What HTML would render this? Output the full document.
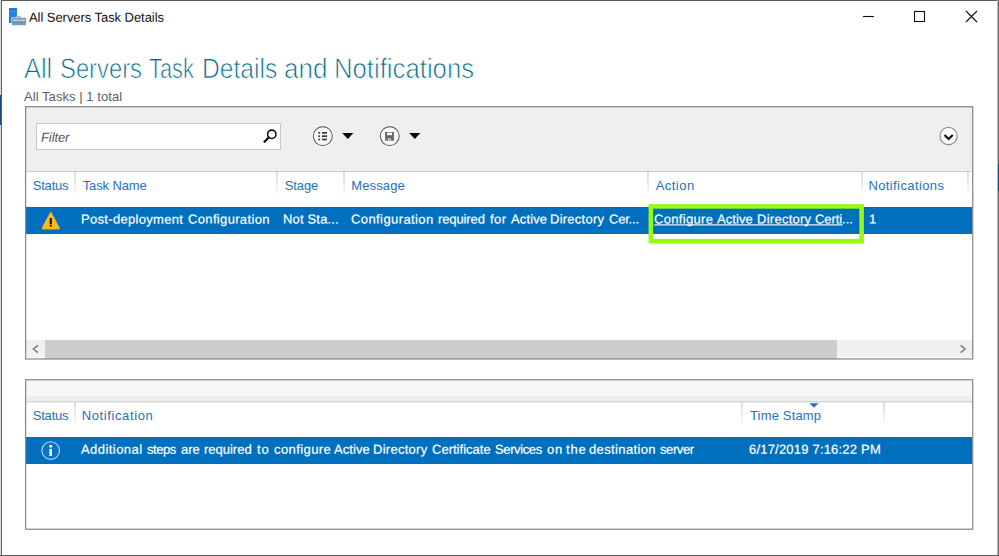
<!DOCTYPE html>
<html>
<head>
<meta charset="utf-8">
<title>All Servers Task Details</title>
<style>
html,body{margin:0;padding:0;}
body{width:999px;height:556px;position:relative;overflow:hidden;background:#fff;font-family:"Liberation Sans",sans-serif;font-size:13px;color:#222;}
.abs{position:absolute;}
.ln{position:absolute;left:0;width:999px;white-space:nowrap;}
.ln span{position:absolute;top:0;transform-origin:0 100%;}
.hd{color:#2b73b9;}
.rw{color:#fff;}
.div{position:absolute;width:2px;margin-left:-1px;background:linear-gradient(#dcdcdc,#ebebeb 50%,rgba(255,255,255,0));}
</style>
</head>
<body>
<!-- window frame -->
<div class="abs" style="left:0;top:0;width:999px;height:1px;background:#5a5a5a;"></div>
<div class="abs" style="left:0;top:0;width:1px;height:556px;background:#d8d8d8;"></div>
<div class="abs" style="left:0;top:95px;width:1px;height:30px;background:#1d4a75;"></div>
<div class="abs" style="left:1px;top:0;width:1px;height:556px;background:#5f5f5f;"></div>
<div class="abs" style="left:997px;top:0;width:1px;height:556px;background:#b8b8b8;"></div>
<div class="abs" style="left:998px;top:0;width:1px;height:556px;background:#6a6a6a;"></div>
<div class="abs" style="left:998px;top:164px;width:1px;height:27px;background:#1d4a75;"></div>
<div class="abs" style="left:0;top:555px;width:999px;height:1px;background:#5a5a5a;"></div>

<!-- title bar -->
<svg class="abs" style="left:8px;top:7px;" width="20" height="20" viewBox="0 0 20 20">
  <rect x="1" y="1" width="8" height="15" fill="#1583dd"/>
  <rect x="1" y="4.3" width="8" height="1" fill="#4aa0e8"/>
  <rect x="1" y="7.4" width="8" height="0.7" fill="#3392e3"/>
  <path d="M3.4 10.3H8.6V8.4H13.4V10.3H18.6V18.6H3.4Z" fill="#fff" opacity=".85"/>
  <rect x="4" y="10.8" width="14.1" height="7.4" rx="0.8" fill="#7f9ab0"/>
  <path d="M9.2 10.8V9.2H12.8V10.8Z" fill="#8fa6b9"/>
  <path d="M5 13.2L6.6 12.2V12.8H15.5V12.2L17.1 13.2L15.5 14.2V13.6H6.6V14.2Z" fill="#f1f5f8"/>
  <rect x="4" y="15.2" width="14.1" height="0.6" fill="#728da4"/>
</svg>
<svg class="abs" style="left:855px;top:4px;" width="130" height="24" viewBox="0 0 130 24">
  <path d="M8 12.5H19" stroke="#111" stroke-width="1.1" fill="none"/>
  <rect x="59.5" y="7.5" width="10" height="10" stroke="#111" stroke-width="1.1" fill="none"/>
  <path d="M111 7L122 18M122 7L111 18" stroke="#111" stroke-width="1.1" fill="none"/>
</svg>

<!-- heading -->

<!-- panel 1 -->
<div class="abs" style="left:26px;top:107px;width:946px;height:64px;background:#efefef;"></div>
<div class="abs" style="left:26px;top:171px;width:946px;height:1px;background:#cbcbcb;"></div>
<!-- filter box -->
<div class="abs" style="left:36px;top:123px;width:243px;height:25px;border:1px solid #c6c6c6;background:#fff;"></div>
<svg class="abs" style="left:260px;top:126px;" width="20" height="20" viewBox="0 0 20 20">
  <circle cx="11.8" cy="8.3" r="4.2" fill="none" stroke="#0c0c0c" stroke-width="1.55"/>
  <path d="M8.7 11.5L4.5 15.7" stroke="#0c0c0c" stroke-width="2.3" stroke-linecap="round"/>
</svg>
<!-- toolbar icons -->
<svg class="abs" style="left:310px;top:124px;" width="120" height="24" viewBox="0 0 120 24">
  <circle cx="12.8" cy="12.1" r="10.8" fill="#fdfdfd"/>
  <circle cx="12.8" cy="12.1" r="9.5" fill="#fafafa" stroke="#62666b" stroke-width="1.15"/>
  <g fill="#3a3a3a">
    <rect x="8.3" y="8" width="1.8" height="1.7"/><rect x="12" y="8" width="5" height="1.7"/>
    <rect x="8.3" y="11.3" width="1.8" height="1.7"/><rect x="12" y="11.3" width="5" height="1.7"/>
    <rect x="8.3" y="14.65" width="1.8" height="1.7"/><rect x="12" y="14.65" width="5" height="1.7"/>
  </g>
  <path d="M32.2 9H43.4L37.8 15.1Z" fill="#0a0a0a"/>
  <circle cx="79.75" cy="12.1" r="10.8" fill="#fdfdfd"/>
  <circle cx="79.75" cy="12.1" r="9.5" fill="#fafafa" stroke="#62666b" stroke-width="1.15"/>
  <rect x="75.1" y="8" width="8.8" height="8.7" fill="#62666b"/>
  <rect x="77" y="8.7" width="5.1" height="2.5" fill="#fafafa"/>
  <rect x="77.7" y="14.4" width="3.4" height="2.3" fill="#d5d7d9"/>
  <rect x="78.9" y="15.6" width="1" height="1.1" fill="#7a7e83"/>
  <path d="M99.2 9H110.4L104.8 15.1Z" fill="#0a0a0a"/>
</svg>
<svg class="abs" style="left:936px;top:124px;" width="24" height="24" viewBox="0 0 24 24">
  <circle cx="12.6" cy="12" r="8.6" fill="#fdfdfd" stroke="#909090" stroke-width="1.2"/>
  <path d="M8.5 11L12.6 15L16.7 11" stroke="#0c0c0c" stroke-width="2.1" fill="none"/>
</svg>

<!-- table 1 header -->
<div class="div" style="left:75px;top:172px;height:24px;"></div>
<div class="div" style="left:277px;top:172px;height:24px;"></div>
<div class="div" style="left:344px;top:172px;height:24px;"></div>
<div class="div" style="left:648px;top:172px;height:24px;"></div>
<div class="div" style="left:862px;top:172px;height:24px;"></div>
<div class="div" style="left:968px;top:172px;height:24px;"></div>

<!-- row 1 -->
<div class="abs" style="left:26px;top:207px;width:946px;height:27px;background:#0070be;"></div>
<svg class="abs" style="left:40px;top:210px;" width="22" height="21" viewBox="0 0 22 21">
  <path d="M10.8 3.7L18.5 18.1H3.1Z" fill="#fcb90f" stroke="#fde9a8" stroke-width="2.6" stroke-linejoin="round" opacity=".55"/>
  <path d="M10.8 3.7L18.5 18.1H3.1Z" fill="#fcb90f" stroke="#fcb90f" stroke-width="1.9" stroke-linejoin="round"/>
  <rect x="9.75" y="8" width="2.1" height="6.1" fill="#161616"/>
  <rect x="9.75" y="14.8" width="2.1" height="1.8" fill="#161616"/>
</svg>
<svg class="abs" style="left:640px;top:196px;" width="232" height="56" viewBox="0 0 232 56">
  <rect x="10.85" y="10.4" width="210.75" height="34.8" fill="none" stroke="#96f916" stroke-width="4.6"/>
</svg>

<!-- scrollbar -->
<div class="abs" style="left:26px;top:340px;width:946px;height:17px;background:#f0f0f0;"></div>
<div class="abs" style="left:45px;top:340px;width:792px;height:19px;background:#cdcdcd;"></div>
<svg class="abs" style="left:26px;top:340px;" width="946" height="18" viewBox="0 0 946 18">
  <path d="M11.9 5.4L7.4 9L11.9 12.6" stroke="#777" stroke-width="1.4" fill="none"/>
  <path d="M934.6 5.4L939.1 9L934.6 12.6" stroke="#777" stroke-width="1.4" fill="none"/>
</svg>

<!-- panel 2 -->
<div class="abs" style="left:26px;top:380px;width:946px;height:16px;background:#f7f7f7;"></div>
<div class="abs" style="left:26px;top:396px;width:946px;height:5px;background:#eeeeee;"></div>
<div class="abs" style="left:26px;top:401px;width:946px;height:1px;background:#d5d5d5;"></div>
<div class="abs" style="left:26px;top:402px;width:946px;height:1px;background:#ececec;"></div>
<div class="div" style="left:75px;top:402px;height:24px;"></div>
<div class="div" style="left:742px;top:402px;height:24px;"></div>
<div class="div" style="left:884px;top:402px;height:24px;"></div>
<svg class="abs" style="left:805px;top:400px;" width="20" height="10" viewBox="0 0 20 10">
  <path d="M4.4 3.3H13.6L9 7.8Z" fill="#2b73b9"/>
</svg>

<!-- row 2 -->
<div class="abs" style="left:26px;top:437.2px;width:946px;height:26.6px;background:#0070be;"></div>
<svg class="abs" style="left:39px;top:439px;" width="24" height="24" viewBox="0 0 24 24">
  <circle cx="11.7" cy="11.6" r="8.8" fill="#0874c6" stroke="#b9d8f0" stroke-width="1.1"/>
  <rect x="10.4" y="9.8" width="2.6" height="7.2" fill="#fff"/>
  <circle cx="11.7" cy="7.2" r="1.45" fill="#fff"/>
</svg>
<svg class="abs" style="left:0;top:0;pointer-events:none;" width="999" height="556" viewBox="0 0 999 556">
  <rect x="25.6" y="106.7" width="947.1" height="252.25" fill="none" stroke="#8c8c8c" stroke-width="1.3"/>
  <path d="M654.3 224.85H842.8" stroke="#fff" stroke-opacity=".88" stroke-width="1.05"/>
  <rect x="25.6" y="379.75" width="947.1" height="149.5" fill="none" stroke="#8c8c8c" stroke-width="1.3"/>
</svg>
<div class="ln" id="ttl" style="top:9px;font-size:13px;line-height:15px;height:15px;color:#111;"><span style="left:29.40px;transform:translateY(0.70px) rotate(0.03deg);letter-spacing:-0.058px;">All Servers Task Details</span></div>
<div class="ln" id="h1" style="top:53px;font-size:28px;line-height:31px;height:31px;color:#056b8c;-webkit-text-stroke:0.75px #fff;"><span style="left:24.45px;transform:translateY(0.30px) rotate(0.03deg) scaleX(0.9065);">All</span> <span style="left:59.60px;transform:translateY(0.30px) rotate(0.03deg) scaleX(0.8500);">Servers</span> <span style="left:149.15px;transform:translateY(0.30px) rotate(0.03deg) scaleX(0.7785);">Task</span> <span style="left:202.09px;transform:translateY(0.30px) rotate(0.03deg) scaleX(0.8791);">Details</span> <span style="left:283.82px;transform:translateY(0.30px) rotate(0.03deg) scaleX(0.9310);">and</span> <span style="left:334.41px;transform:translateY(0.30px) rotate(0.03deg) scaleX(0.9183);">Notifications</span></div>
<div class="ln" id="sub" style="top:89px;font-size:13px;line-height:15px;height:15px;color:#5e5e5e;"><span style="left:24.00px;letter-spacing:0.060px;">All Tasks | 1 total</span></div>
<div class="ln" id="flt" style="top:129px;font-size:13px;line-height:15px;height:15px;color:#555;font-style:italic;"><span style="left:40.90px;transform:translateY(0.70px) rotate(0.03deg);letter-spacing:-0.092px;">Filter</span></div>
<div class="ln" id="hdr1" style="top:178px;font-size:13px;line-height:15px;height:15px;color:#2672b8;"><span style="left:32.70px;letter-spacing:-0.191px;">Status</span> <span style="left:82.70px;letter-spacing:-0.124px;">Task Name</span> <span style="left:284.70px;letter-spacing:-0.086px;">Stage</span> <span style="left:351.30px;letter-spacing:0.113px;">Message</span> <span style="left:655.70px;letter-spacing:0.460px;">Action</span> <span style="left:868.40px;letter-spacing:0.399px;">Notifications</span></div>
<div class="ln" id="row1" style="top:211px;font-size:13px;line-height:15px;height:15px;color:#fff;-webkit-text-stroke:0.2px #fff;"><span style="left:80.90px;transform:translateY(0.60px) rotate(0.03deg);letter-spacing:0.312px;">Post-deployment</span> <span style="left:187.80px;transform:translateY(0.60px) rotate(0.03deg);letter-spacing:0.342px;">Configuration</span> <span style="left:282.80px;transform:translateY(0.60px) rotate(0.03deg);letter-spacing:0.169px;">Not Sta...</span> <span style="left:350.90px;transform:translateY(0.60px) rotate(0.03deg);letter-spacing:0.409px;">Configuration</span> <span style="left:438.30px;transform:translateY(0.60px) rotate(0.03deg);letter-spacing:-0.109px;">required</span> <span style="left:489.90px;transform:translateY(0.60px) rotate(0.03deg);letter-spacing:0.429px;">for</span> <span style="left:511.10px;transform:translateY(0.60px) rotate(0.03deg);letter-spacing:0.126px;">Active</span> <span style="left:550.20px;transform:translateY(0.60px) rotate(0.03deg);letter-spacing:0.249px;">Directory</span> <span style="left:609.40px;transform:translateY(0.60px) rotate(0.03deg);letter-spacing:-0.211px;">Cer...</span> <span style="left:654.00px;transform:translateY(0.60px) rotate(0.03deg);letter-spacing:0.320px;">Configure</span> <span style="left:717.40px;transform:translateY(0.60px) rotate(0.03deg);letter-spacing:0.086px;">Active</span> <span style="left:756.50px;transform:translateY(0.60px) rotate(0.03deg);letter-spacing:0.262px;">Directory</span> <span style="left:815.40px;transform:translateY(0.60px) rotate(0.03deg);letter-spacing:-0.067px;">Certi...</span> <span style="left:869.30px;transform:translateY(0.60px) rotate(0.03deg);">1</span></div>
<div class="ln" id="hdr2" style="top:408px;font-size:13px;line-height:15px;height:15px;color:#2672b8;"><span style="left:32.70px;letter-spacing:-0.191px;">Status</span> <span style="left:81.70px;letter-spacing:0.611px;">Notification</span> <span style="left:750.00px;letter-spacing:0.160px;">Time Stamp</span></div>
<div class="ln" id="row2" style="top:441px;font-size:13px;line-height:15px;height:15px;color:#fff;-webkit-text-stroke:0.2px #fff;"><span style="left:81.30px;transform:translateY(0.65px) rotate(0.03deg);letter-spacing:0.443px;">Additional</span> <span style="left:146.70px;transform:translateY(0.65px) rotate(0.03deg);letter-spacing:-0.443px;">steps</span> <span style="left:181.10px;transform:translateY(0.65px) rotate(0.03deg);letter-spacing:-0.080px;">are</span> <span style="left:203.70px;transform:translateY(0.65px) rotate(0.03deg);letter-spacing:-0.009px;">required</span> <span style="left:257.40px;transform:translateY(0.65px) rotate(0.03deg);letter-spacing:0.888px;">to</span> <span style="left:273.60px;transform:translateY(0.65px) rotate(0.03deg);letter-spacing:0.419px;">configure</span> <span style="left:333.70px;transform:translateY(0.65px) rotate(0.03deg);letter-spacing:0.086px;">Active</span> <span style="left:372.80px;transform:translateY(0.65px) rotate(0.03deg);letter-spacing:0.274px;">Directory</span> <span style="left:431.50px;transform:translateY(0.65px) rotate(0.03deg);letter-spacing:0.011px;">Certificate</span> <span style="left:495.30px;transform:translateY(0.65px) rotate(0.03deg);letter-spacing:-0.378px;">Services</span> <span style="left:546.70px;transform:translateY(0.65px) rotate(0.03deg);letter-spacing:0.770px;">on</span> <span style="left:565.90px;transform:translateY(0.65px) rotate(0.03deg);letter-spacing:0.879px;">the</span> <span style="left:589.20px;transform:translateY(0.65px) rotate(0.03deg);letter-spacing:0.365px;">destination</span> <span style="left:660.20px;transform:translateY(0.65px) rotate(0.03deg);letter-spacing:-0.398px;">server</span> <span style="left:748.50px;transform:translateY(0.65px) rotate(0.03deg);letter-spacing:0.200px;">6/17/2019 7:16:22 PM</span></div>
</body>
</html>
